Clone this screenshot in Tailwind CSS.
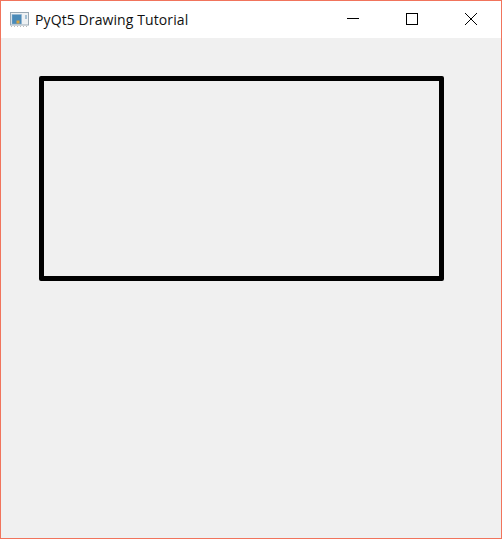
<!DOCTYPE html>
<html lang="en">
<head>
  <meta charset="UTF-8" />
  <title>PyQt5 Drawing Tutorial</title>
  <script src="https://cdn.jsdelivr.net/npm/@tailwindcss/browser@4"></script>
</head>
<body class="m-0 overflow-hidden">
  <div class="w-[502px] h-[539px] flex flex-col border border-[#f1745c] bg-[#f0f0f0] font-['Open_Sans',sans-serif]">

    <!-- Title bar -->
    <div class="h-[37px] shrink-0 flex items-center bg-white">
      <svg class="ml-[9px] w-[19px] h-[15px] shrink-0" viewBox="0 0 19 15">
        <rect x="0.5" y="0.5" width="18" height="12.5" fill="#eef1f3" stroke="#9aa9b4" />
        <rect x="2" y="2.5" width="9.5" height="9.5" fill="#4a8ab8" stroke="#8fb4cf" stroke-width="0.5" />
        <rect x="6.5" y="8.5" width="3" height="3" fill="#d9a441" />
        <rect x="15.5" y="3" width="1" height="4" fill="#5a8fb5" />
        <path d="M1 14.5h17" stroke="#bbb" stroke-dasharray="1 2" />
      </svg>
      <span class="ml-[6px] text-[14px] tracking-[0.1px] leading-none text-[#111] whitespace-nowrap">PyQt5 Drawing Tutorial</span>
      <div class="ml-auto flex items-center h-full">
        <svg class="w-[58px] h-[37px]" viewBox="0 0 58 37">
          <path d="M23 17.5h12" stroke="#000" fill="none" />
        </svg>
        <svg class="w-[60px] h-[37px]" viewBox="0 0 60 37">
          <rect x="24.5" y="12.5" width="11" height="11" stroke="#000" fill="none" />
        </svg>
        <svg class="w-[59px] h-[37px]" viewBox="0 0 59 37">
          <path d="M23 12l12 12M35 12l-12 12" stroke="#000" fill="none" />
        </svg>
      </div>
    </div>

    <!-- Canvas -->
    <div class="flex-1 pt-[38px] pl-[38px]">
      <div class="w-[405px] h-[205px] border-[5px] border-black rounded-[2px]"></div>
    </div>
  </div>
</body>
</html>
